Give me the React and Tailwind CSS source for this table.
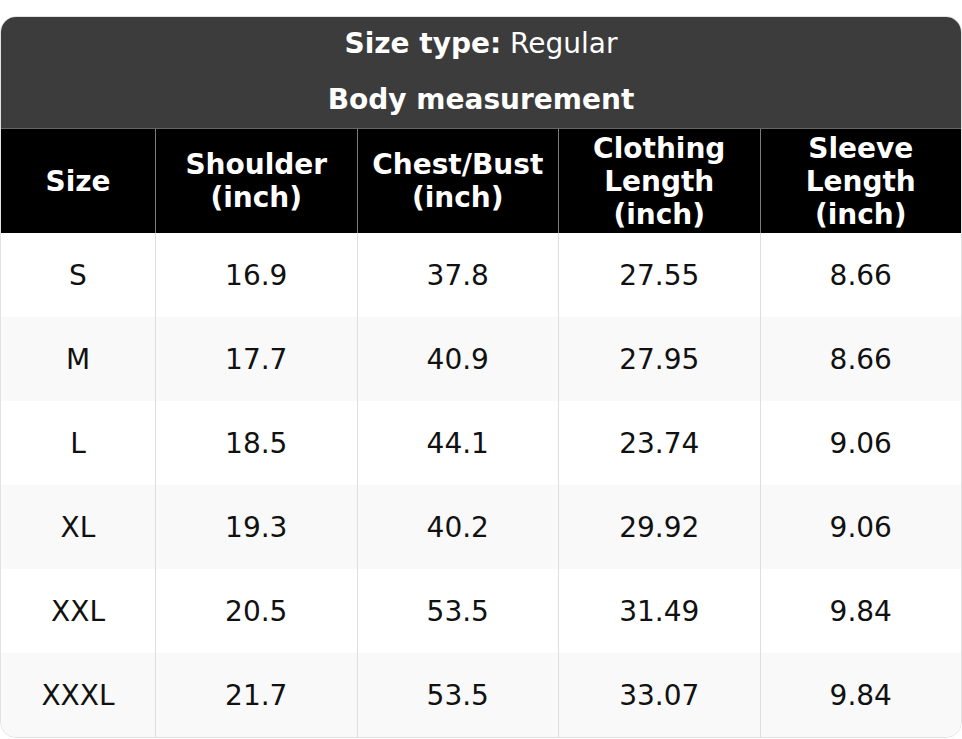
import React from "react";

const columns = [
  ["Size"],
  ["Shoulder", "(inch)"],
  ["Chest/Bust", "(inch)"],
  ["Clothing", "Length", "(inch)"],
  ["Sleeve", "Length", "(inch)"],
];

const rows = [
  ["S", "16.9", "37.8", "27.55", "8.66"],
  ["M", "17.7", "40.9", "27.95", "8.66"],
  ["L", "18.5", "44.1", "23.74", "9.06"],
  ["XL", "19.3", "40.2", "29.92", "9.06"],
  ["XXL", "20.5", "53.5", "31.49", "9.84"],
  ["XXXL", "21.7", "53.5", "33.07", "9.84"],
];

const App = () => {
  return (
    <div
      className="bg-white pt-4 w-[962px]"
      style={{ fontFamily: '"DejaVu Sans", sans-serif' }}
    >
      <div className="rounded-2xl overflow-hidden border border-[#e2e2e2] text-[28px] leading-[33px]">
        <div className="bg-[#3c3c3c] text-white text-center border-b border-[#666]">
          <div className="h-[53px] flex items-center justify-center">
            <span>
              <b>Size type:</b> Regular
            </span>
          </div>
          <div className="h-[58px] flex items-center justify-center font-bold">
            Body measurement
          </div>
        </div>

        <div className="grid grid-cols-[154px_1fr_1fr_1fr_1fr] bg-black text-white font-bold text-center h-[104px]">
          {columns.map((lines, i) => (
            <div
              key={i}
              className={
                "flex flex-col items-center justify-center " +
                (i > 0 ? "border-l border-[#7a7a7a]" : "")
              }
            >
              {lines.map((l) => (
                <div key={l}>{l}</div>
              ))}
            </div>
          ))}
        </div>

        {rows.map((row, r) => (
          <div
            key={r}
            className={
              "grid grid-cols-[154px_1fr_1fr_1fr_1fr] h-[84px] text-center text-[#111] " +
              (r % 2 === 1 ? "bg-[#f9f9f9]" : "bg-white")
            }
          >
            {row.map((cell, i) => (
              <div
                key={i}
                className={
                  "flex items-center justify-center " +
                  (i > 0 ? "border-l border-[#dedede]" : "")
                }
              >
                {cell}
              </div>
            ))}
          </div>
        ))}
      </div>
    </div>
  );
};

export default App;
